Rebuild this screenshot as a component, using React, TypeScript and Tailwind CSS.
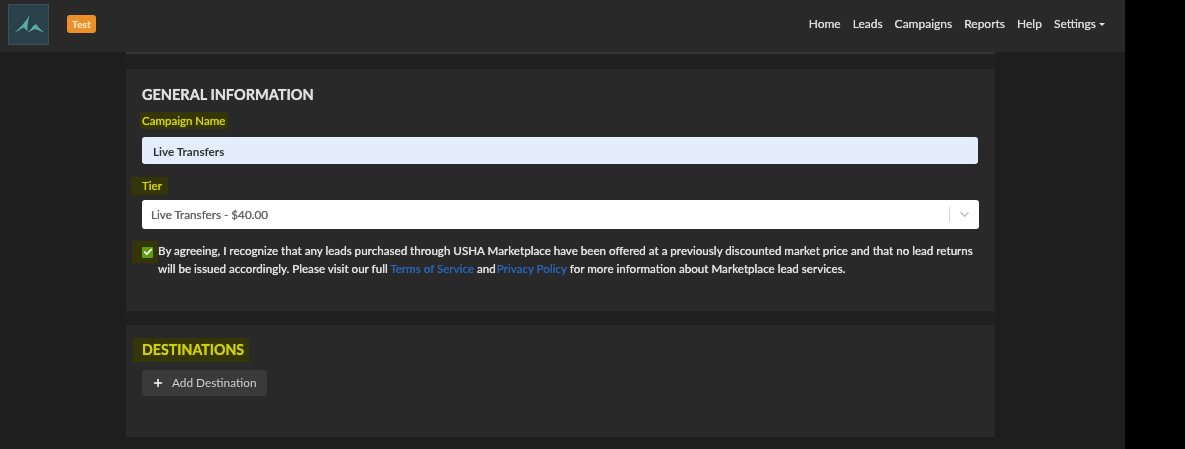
import { ChevronDown, Plus, Check } from "lucide-react";

const navItems = ["Home", "Leads", "Campaigns", "Reports", "Help"];

export default function App() {
  return (
    <div className="flex h-[449px] w-[1185px] overflow-hidden bg-black font-['Lato','Liberation_Sans',sans-serif] text-white">
      <div className="flex w-[1125px] flex-col bg-[#1e1e1e] blur-[0.6px] [text-shadow:0_0_0.7px_currentColor]">
        <header className="flex h-[52px] shrink-0 items-center justify-between bg-[#292929] pb-[4px] pl-2 pr-5">
          <div className="flex items-center gap-[18px]">
            <div className="flex h-[41px] w-[41px] items-center justify-center border border-[#3a5058] bg-[#2b4149]">
              <svg width="39" height="39" viewBox="9 5 39 39" fill="none">
                <path d="M14 33 C20 28 26 22 29.5 15 C28 21 27 26 27.5 31 C25.5 29.5 24.5 28.5 23.5 27.5 C20 29.5 17 31.5 14 33Z" fill="#58ada5" />
                <path d="M27 32 C30 31 32 28 33 26 L36 24 C38 27 41 30 44 32.5 C40 31 38 30 35 29 C32 30 30 32 27 32Z" fill="#58ada5" />
              </svg>
            </div>
            <span className="flex h-[18px] w-[29px] items-center justify-center rounded-[3px] bg-[#ec9129] text-[10px] font-bold text-[#fbe0bb]">
              Test
            </span>
          </div>
          <nav className="flex items-center gap-[12px] text-[12px] text-[#dcdcdc]">
            {navItems.map((item) => (
              <span key={item}>{item}</span>
            ))}
            <span className="flex items-center gap-[3px]">
              Settings
              <span className="h-0 w-0 border-x-[3px] border-t-[3px] border-x-transparent border-t-[#e4e4e4]" />
            </span>
          </nav>
        </header>

        <main className="ml-[126px] flex w-[869px] flex-col">
          <div className="h-[2px] bg-[#363636]" />
          <div className="h-[15px] bg-[#202020]" />

          <section className="flex h-[242px] flex-col bg-[#292929] px-4 pt-[17px]">
            <h2 className="text-[14.5px] leading-[18px] font-bold text-[#e0e0e0]">GENERAL INFORMATION</h2>
            <label className="-ml-[2px] mt-[8px] w-[88px] bg-[#35350a] pl-[2px] text-[11.5px] leading-[17px] font-medium whitespace-nowrap text-[#d0d010]">
              Campaign Name
            </label>
            <input
              readOnly
              value="Live Transfers"
              className="mt-[8px] h-[27px] w-[836px] rounded-[3px] bg-[#e4edfc] px-[11px] font-['Lato'] text-[11.7px] font-bold text-[#333333] outline-none"
            />
            <label className="-ml-[11px] mt-[13px] w-[37px] bg-[#35350a] pl-[11px] text-[11.5px] leading-[18px] font-medium text-[#d0d010]">
              Tier
            </label>
            <div className="mt-[5px] flex h-[29px] w-[837px] items-center rounded-[3px] bg-white pl-[9px] text-[11.7px] text-[#666666]">
              <span className="flex-1">Live Transfers - $40.00</span>
              <span className="h-[15px] w-px bg-[#d8d8d8]" />
              <ChevronDown className="mx-[7px] h-[15px] w-[15px] text-[#b5b5b5]" strokeWidth={2} />
            </div>
            <div className="mt-[12px] flex items-start">
              <div className="-ml-[10px] flex h-[22px] w-[26px] shrink-0 items-center justify-end bg-[#35350a] pr-[5px]">
                <span className="flex h-[11px] w-[11px] items-center justify-center rounded-[1px] bg-[#5f9e12]">
                  <Check className="h-[10px] w-[10px] text-white" strokeWidth={4} />
                </span>
              </div>
              <p className="mt-[1px] w-[825px] text-[11.6px] leading-[17.5px] font-medium text-[#e0e0e0]">
                By agreeing, I recognize that any leads purchased through USHA Marketplace have been offered at a previously discounted market price and that no lead returns will be issued accordingly. Please visit our full{" "}
                <span className="text-[#2c62b0]">Terms of Service</span> and<span className="ml-[1px] text-[#2c62b0]">Privacy Policy</span> for more information about Marketplace lead services.
              </p>
            </div>
          </section>

          <div className="h-[14px] bg-[#202020]" />

          <section className="flex h-[112px] flex-col items-start bg-[#292929] px-4 pt-[13px]">
            <h2 className="-ml-[9px] bg-[#35350a] pl-[9px] pr-[5px] text-[14.2px] leading-[24px] font-bold text-[#d0d010]">
              DESTINATIONS
            </h2>
            <button className="mt-[8px] flex h-[26px] w-[125px] items-center gap-[8px] rounded-[3px] bg-[#3a3a3a] pl-[10px] text-[11.8px] text-[#cfcfcf]">
              <Plus className="h-[12px] w-[12px] text-white" strokeWidth={3} />
              Add Destination
            </button>
          </section>
        </main>
      </div>
    </div>
  );
}
